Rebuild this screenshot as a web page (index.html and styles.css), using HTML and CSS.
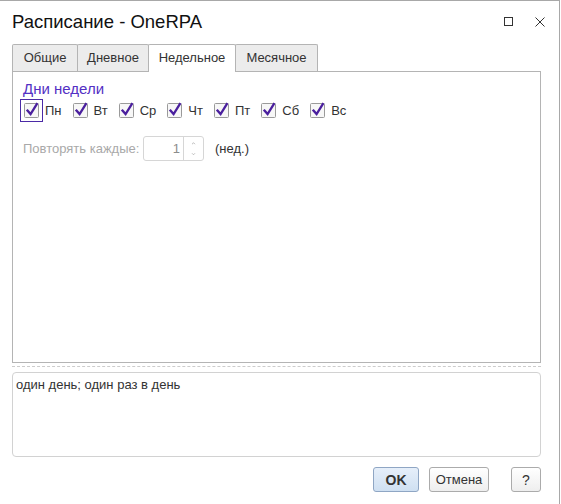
FILE: index.html
```html
<!DOCTYPE html>
<html lang="ru">
<head>
<meta charset="utf-8">
<title>Расписание - OneRPA</title>
<link rel="stylesheet" href="styles.css">
</head>
<body>
<div class="window">
  <header class="titlebar">
    <h1 class="title">Расписание - OneRPA</h1>
    <div class="win-controls">
      <svg class="win-icon" width="9" height="9" viewBox="0 0 9 9"><rect x="0.5" y="0.5" width="8" height="8" fill="none" stroke="#333" stroke-width="1"/></svg>
      <svg class="win-icon" width="10" height="10" viewBox="0 0 10 10"><path d="M0.5 0.5 L9.5 9.5 M9.5 0.5 L0.5 9.5" stroke="#333" stroke-width="1" fill="none"/></svg>
    </div>
  </header>
  <div class="content">
    <nav class="tabs">
      <div class="tab tab-general">Общие</div>
      <div class="tab tab-daily">Дневное</div>
      <div class="tab tab-weekly active">Недельное</div>
      <div class="tab tab-monthly">Месячное</div>
    </nav>
    <section class="panel">
      <div class="group-title">Дни недели</div>
      <div class="days">
        <label class="day"><span class="cb-wrap focused"><svg class="cb" width="16" height="16" viewBox="0 0 16 16"><rect x="0.5" y="0.5" width="14" height="14" rx="1" fill="#f7f7f7" stroke="#9a9a9a"/><path d="M3.5 7.5 L6.6 11 L12.8 1.2" fill="none" stroke="#4a1f9e" stroke-width="2.3" stroke-linecap="square" stroke-linejoin="miter"/></svg></span><span class="day-label">Пн</span></label>
        <label class="day"><span class="cb-wrap"><svg class="cb" width="16" height="16" viewBox="0 0 16 16"><rect x="0.5" y="0.5" width="14" height="14" rx="1" fill="#f7f7f7" stroke="#9a9a9a"/><path d="M3.5 7.5 L6.6 11 L12.8 1.2" fill="none" stroke="#4a1f9e" stroke-width="2.3" stroke-linecap="square" stroke-linejoin="miter"/></svg></span><span class="day-label">Вт</span></label>
        <label class="day"><span class="cb-wrap"><svg class="cb" width="16" height="16" viewBox="0 0 16 16"><rect x="0.5" y="0.5" width="14" height="14" rx="1" fill="#f7f7f7" stroke="#9a9a9a"/><path d="M3.5 7.5 L6.6 11 L12.8 1.2" fill="none" stroke="#4a1f9e" stroke-width="2.3" stroke-linecap="square" stroke-linejoin="miter"/></svg></span><span class="day-label">Ср</span></label>
        <label class="day"><span class="cb-wrap"><svg class="cb" width="16" height="16" viewBox="0 0 16 16"><rect x="0.5" y="0.5" width="14" height="14" rx="1" fill="#f7f7f7" stroke="#9a9a9a"/><path d="M3.5 7.5 L6.6 11 L12.8 1.2" fill="none" stroke="#4a1f9e" stroke-width="2.3" stroke-linecap="square" stroke-linejoin="miter"/></svg></span><span class="day-label">Чт</span></label>
        <label class="day"><span class="cb-wrap"><svg class="cb" width="16" height="16" viewBox="0 0 16 16"><rect x="0.5" y="0.5" width="14" height="14" rx="1" fill="#f7f7f7" stroke="#9a9a9a"/><path d="M3.5 7.5 L6.6 11 L12.8 1.2" fill="none" stroke="#4a1f9e" stroke-width="2.3" stroke-linecap="square" stroke-linejoin="miter"/></svg></span><span class="day-label">Пт</span></label>
        <label class="day"><span class="cb-wrap"><svg class="cb" width="16" height="16" viewBox="0 0 16 16"><rect x="0.5" y="0.5" width="14" height="14" rx="1" fill="#f7f7f7" stroke="#9a9a9a"/><path d="M3.5 7.5 L6.6 11 L12.8 1.2" fill="none" stroke="#4a1f9e" stroke-width="2.3" stroke-linecap="square" stroke-linejoin="miter"/></svg></span><span class="day-label">Сб</span></label>
        <label class="day"><span class="cb-wrap"><svg class="cb" width="16" height="16" viewBox="0 0 16 16"><rect x="0.5" y="0.5" width="14" height="14" rx="1" fill="#f7f7f7" stroke="#9a9a9a"/><path d="M3.5 7.5 L6.6 11 L12.8 1.2" fill="none" stroke="#4a1f9e" stroke-width="2.3" stroke-linecap="square" stroke-linejoin="miter"/></svg></span><span class="day-label">Вс</span></label>
      </div>
      <div class="repeat">
        <span class="repeat-label">Повторять каждые:</span>
        <div class="spin">
          <span class="spin-value">1</span>
          <div class="spin-btns">
            <svg class="spin-arrow" width="20" height="11" viewBox="0 0 20 11"><path d="M8.5 7 L10 5.5 L11.5 7" fill="none" stroke="#b5b5b5" stroke-width="1"/></svg>
            <svg class="spin-arrow" width="20" height="11" viewBox="0 0 20 11"><path d="M8.5 4 L10 5.5 L11.5 4" fill="none" stroke="#b5b5b5" stroke-width="1"/></svg>
          </div>
        </div>
        <span class="unit">(нед.)</span>
      </div>
    </section>
    <div class="separator"></div>
    <div class="summary">один день; один раз в день</div>
    <div class="buttons">
      <button class="btn btn-default">OK</button>
      <button class="btn btn-cancel">Отмена</button>
      <button class="btn btn-help">?</button>
    </div>
  </div>
</div>
</body>
</html>
```

FILE: styles.css
```css
* {
  box-sizing: border-box;
}

html, body {
  margin: 0;
  padding: 0;
  background: #ffffff;
}

body {
  font-family: "Liberation Sans", Arial, sans-serif;
  font-size: 13px;
  color: #333333;
}

.window {
  width: 560px;
  height: 504px;
  border-top: 1px solid #a8a8a8;
  border-right: 1px solid #a8a8a8;
  background: #ffffff;
}

.titlebar {
  display: flex;
  justify-content: space-between;
  align-items: flex-start;
  height: 43px;
  padding: 0 14px 0 12px;
}

.title {
  margin: 10px 0 0 0;
  font-size: 18.5px;
  line-height: 22px;
  font-weight: normal;
  color: #111111;
}

.win-controls {
  display: flex;
  align-items: flex-start;
  gap: 22px;
  margin-top: 16px;
}

.win-icon {
  display: block;
}

.content {
  width: 529px;
  margin-left: 12px;
}

.tabs {
  display: flex;
  align-items: flex-end;
  height: 27px;
}

.tab {
  height: 27px;
  margin-right: -1px;
  border: 1px solid #b4b4b4;
  border-bottom: none;
  border-radius: 2px 2px 0 0;
  background: #ececec;
  color: #333333;
  font-size: 13px;
  line-height: 25px;
  text-align: center;
}

.tab-general { width: 66px; }
.tab-daily { width: 72px; }
.tab-weekly { width: 88px; }
.tab-monthly { width: 83px; }

.tab.active {
  position: relative;
  z-index: 1;
  height: 28px;
  margin-bottom: -1px;
  background: #ffffff;
}

.panel {
  height: 292px;
  border: 1px solid #b4b4b4;
  padding: 8px 10px;
}

.group-title {
  font-size: 15px;
  line-height: 17px;
  color: #5330c4;
}

.days {
  display: flex;
  align-items: center;
  column-gap: 7px;
  margin: 2px 0 0 -3px;
}

.day {
  display: flex;
  align-items: center;
}

.cb-wrap {
  display: flex;
  align-items: center;
  justify-content: center;
  width: 23px;
  height: 23px;
  border: 1px solid transparent;
}

.cb-wrap.focused {
  border-color: #4b2aa6;
}

.cb {
  display: block;
  overflow: visible;
  margin: 1px 0 0 1px;
}

.day-label {
  margin-left: 2px;
  font-size: 13px;
  line-height: 15px;
  color: #333333;
}

.repeat {
  display: flex;
  align-items: center;
  margin-top: 14px;
}

.repeat-label {
  width: 120px;
  color: #a9a9a9;
  font-size: 13px;
}

.spin {
  display: flex;
  width: 61px;
  height: 25px;
  border: 1px solid #d6d6d6;
  border-radius: 3px;
}

.spin-value {
  width: 40px;
  padding-right: 3px;
  text-align: right;
  line-height: 23px;
  color: #8c8c8c;
}

.spin-btns {
  display: flex;
  flex-direction: column;
  width: 20px;
  border-left: 1px solid #d6d6d6;
}

.spin-arrow {
  display: block;
  width: 19px;
  height: 11.5px;
}

.unit {
  margin-left: 11px;
  color: #333333;
}

.separator {
  margin-top: 3px;
  border-top: 1px dashed #cccccc;
}

.summary {
  height: 85px;
  margin-top: 5px;
  padding: 4px 3px;
  border: 1px solid #d2d2d2;
  border-radius: 4px;
  font-size: 13px;
  line-height: 15px;
  color: #333333;
}

.buttons {
  display: flex;
  justify-content: flex-end;
  margin-top: 10px;
}

.btn {
  height: 25px;
  padding: 0;
  border: 1px solid #ababab;
  border-radius: 3px;
  background: linear-gradient(#ffffff, #eeeeee);
  font-family: "Liberation Sans", Arial, sans-serif;
  font-size: 13px;
  color: #333333;
}

.btn-default {
  width: 46px;
  border-color: #8fa6c4;
  background: linear-gradient(#e6effa, #cfe0f2);
  font-weight: bold;
  font-size: 14px;
}

.btn-cancel {
  width: 60px;
  margin-left: 10px;
}

.btn-help {
  width: 30px;
  margin-left: 22px;
  font-size: 14px;
}
```
